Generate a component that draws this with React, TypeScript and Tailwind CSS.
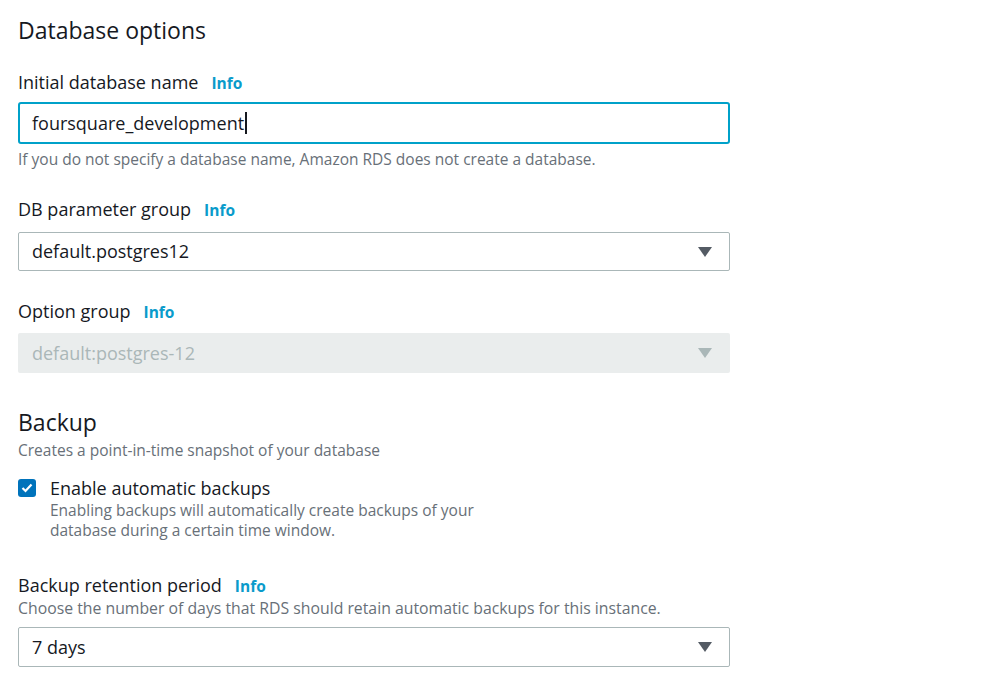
import React from "react";

const font = { fontFamily: "'Open Sans', 'Noto Sans', sans-serif" };

function Info() {
  return <span className="ml-[13px] text-[15.5px] font-bold leading-[24px] text-[#0a9bcb]">Info</span>;
}

function Label({ children }: { children: React.ReactNode }) {
  return (
    <div className="flex h-[24px] items-baseline text-[18px] leading-[24px] text-[#16191f]">
      <span>{children}</span>
      <Info />
    </div>
  );
}

function Caret({ disabled = false }: { disabled?: boolean }) {
  return (
    <svg width="14" height="12" viewBox="0 0 14 12" className="shrink-0">
      <path d="M0 1 L14 1 L7 11 Z" fill={disabled ? "#aab7b8" : "#545b64"} />
    </svg>
  );
}

function Select({ value, disabled = false, tall = false }: { value: string; disabled?: boolean; tall?: boolean }) {
  if (disabled) {
    return (
      <div className="flex h-[40px] items-center justify-between rounded-[2px] bg-[#eaeded] pl-[14px] pr-[18px] text-[18px] text-[#aab7b8]">
        <span>{value}</span>
        <Caret disabled />
      </div>
    );
  }
  return (
    <div
      className={
        (tall ? "h-[40px] " : "h-[39px] ") +
        "flex items-center justify-between rounded-[2px] border border-[#aab7b8] bg-white pl-[13px] pr-[17px] text-[18px] text-[#16191f]"
      }
    >
      <span>{value}</span>
      <Caret />
    </div>
  );
}

export default function App() {
  return (
    <div className="min-h-[690px] bg-white pl-[18px] pt-[15px]" style={font}>
      <div className="w-[712px]">
        <h2 className="h-[30px] text-[23px] leading-[30px] text-[#16191f]">Database options</h2>

        <div className="mt-[25px]">
          <Label>Initial database name</Label>
          <div className="mt-[8px] flex h-[42px] items-center rounded-[3px] border-2 border-[#00a1c9] pl-[12px] text-[18px] text-[#16191f]">
            foursquare_development
            <span className="ml-[1px] inline-block h-[22px] w-[1.5px] bg-[#16191f]" />
          </div>
          <p className="mt-[5px] h-[20px] text-[15.5px] leading-[20px] text-[#687078]">
            If you do not specify a database name, Amazon RDS does not create a database.
          </p>
        </div>

        <div className="mt-[28px]">
          <Label>DB parameter group</Label>
          <div className="mt-[11px]">
            <Select value="default.postgres12" />
          </div>
        </div>

        <div className="mt-[28px]">
          <Label>Option group</Label>
          <div className="mt-[10px]">
            <Select value="default:postgres-12" disabled />
          </div>
        </div>

        <h2 className="mt-[34px] h-[30px] text-[23px] leading-[30px] text-[#16191f]">Backup</h2>
        <p className="mt-[3px] h-[20px] text-[15.5px] leading-[20px] text-[#687078]">
          Creates a point-in-time snapshot of your database
        </p>

        <div className="mt-[16px] flex gap-[14px]">
          <div className="mt-[3px] flex h-[18px] w-[18px] items-center justify-center rounded-[3px] bg-[#0073bb]">
            <svg width="12" height="10" viewBox="0 0 12 10">
              <path d="M1.5 5 L4.5 8 L10.5 1.5" stroke="white" strokeWidth="2.2" fill="none" />
            </svg>
          </div>
          <div>
            <div className="h-[24px] text-[18px] leading-[24px] text-[#16191f]">Enable automatic backups</div>
            <p className="w-[445px] text-[15.5px] leading-[20px] text-[#687078]">
              Enabling backups will automatically create backups of your database during a certain time window.
            </p>
          </div>
        </div>

        <div className="mt-[33px]">
          <Label>Backup retention period</Label>
          <p className="mt-[1px] h-[20px] text-[15.8px] leading-[20px] text-[#687078]">
            Choose the number of days that RDS should retain automatic backups for this instance.
          </p>
          <div className="mt-[9px]">
            <Select value="7 days" tall />
          </div>
        </div>
      </div>
    </div>
  );
}
